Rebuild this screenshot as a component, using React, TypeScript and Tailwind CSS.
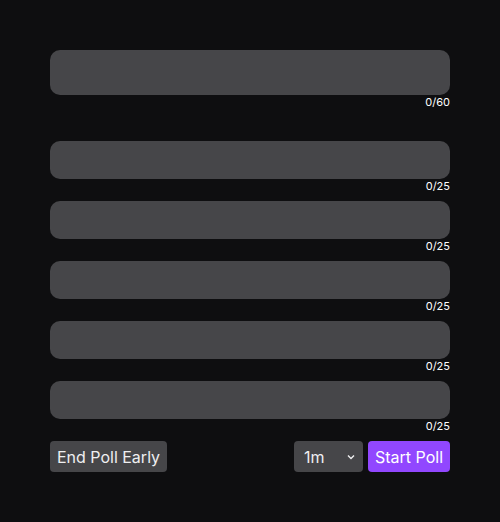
import { useState } from "react";

const OPTION_COUNT = 5;

function Field({
  height,
  max,
  value,
  onChange,
}: {
  height: string;
  max: number;
  value: string;
  onChange: (v: string) => void;
}) {
  return (
    <div className="flex flex-col">
      <input
        className={`w-full ${height} rounded-[10px] bg-[#464649] px-3 text-[15px] text-white outline-none`}
        maxLength={max}
        value={value}
        onChange={(e) => onChange(e.target.value)}
      />
      <div className="h-[14px] text-right text-[11px] leading-[14px] text-white">
        {value.length}/{max}
      </div>
    </div>
  );
}

export default function App() {
  const [question, setQuestion] = useState("");
  const [options, setOptions] = useState<string[]>(Array(OPTION_COUNT).fill(""));
  const [duration, setDuration] = useState("1m");

  return (
    <div
      className="min-h-[522px] w-full bg-[#0e0e10] px-[50px] pt-[50px]"
      style={{ fontFamily: "Inter, 'Noto Sans', sans-serif" }}
    >
      <Field height="h-[45px]" max={60} value={question} onChange={setQuestion} />

      <div className="mt-[32px] flex flex-col gap-2">
        {options.map((o, i) => (
          <Field
            key={i}
            height="h-[38px]"
            max={25}
            value={o}
            onChange={(v) =>
              setOptions((prev) => prev.map((p, j) => (j === i ? v : p)))
            }
          />
        ))}
      </div>

      <div className="mt-2 flex items-center justify-between">
        <button className="h-[31px] w-[117px] rounded bg-[#464649] text-[16px] font-normal text-[#efeff1]">
          End Poll Early
        </button>
        <div className="flex items-center gap-[5px]">
          <div className="relative">
            <select
              className="h-[31px] w-[69px] appearance-none rounded bg-[#464649] pl-[10px] text-[16px] font-normal text-[#efeff1] outline-none"
              value={duration}
              onChange={(e) => setDuration(e.target.value)}
            >
              <option value="1m">1m</option>
              <option value="2m">2m</option>
              <option value="5m">5m</option>
            </select>
            <svg
              className="pointer-events-none absolute right-[8px] top-[13px]"
              width="8"
              height="6"
              viewBox="0 0 8 6"
              fill="none"
              stroke="#efeff1"
              strokeWidth="1.4"
            >
              <path d="M1 1.5 L4 4.5 L7 1.5" />
            </svg>
          </div>
          <button className="h-[31px] w-[82px] rounded bg-[#9147ff] text-[16px] font-normal text-white">
            Start Poll
          </button>
        </div>
      </div>
    </div>
  );
}
